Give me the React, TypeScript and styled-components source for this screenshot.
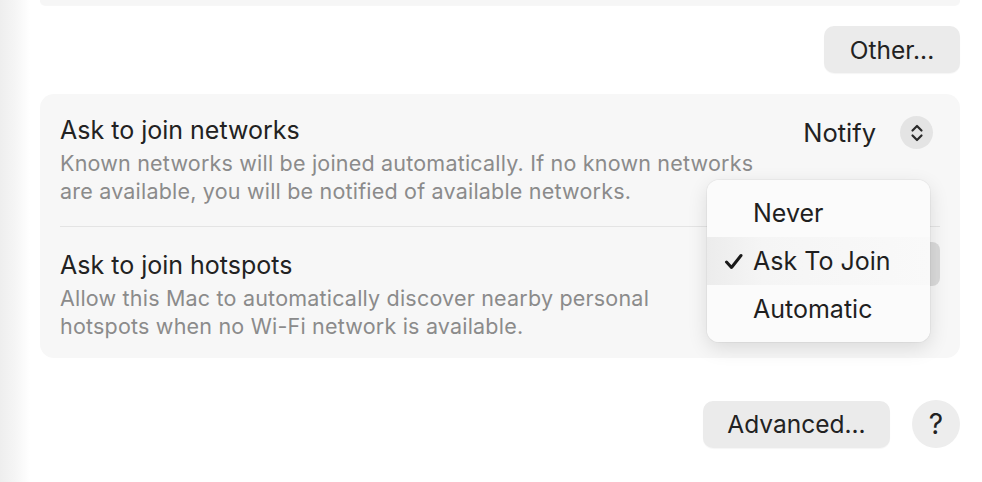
import styled, { createGlobalStyle } from "styled-components";

const GlobalStyle = createGlobalStyle`
  html, body {
    margin: 0;
    padding: 0;
    background: #ffffff;
  }
  body {
    font-family: Inter, "Noto Sans", "Liberation Sans", sans-serif;
    color: #242424;
    -webkit-font-smoothing: antialiased;
  }
`;

const Page = styled.div`
  display: flex;
  width: 982px;
  height: 482px;
  overflow: hidden;
  background: #fff;
`;

const SideShade = styled.div`
  width: 30px;
  flex: none;
  background: linear-gradient(to right, #eeeeee, #f5f5f5 50%, #ffffff);
`;

const Content = styled.div`
  flex: 1;
  display: flex;
  flex-direction: column;
  padding: 0 22px 0 10px;
`;

const CardStub = styled.div`
  height: 5px;
  background: #f6f6f6;
  border-radius: 0 0 14px 14px;
  box-shadow: 0 1px 0 rgba(0, 0, 0, 0.03);
`;

const ButtonRow = styled.div<{ $top: number }>`
  display: flex;
  justify-content: flex-end;
  align-items: center;
  gap: 22px;
  margin-top: ${(p) => p.$top}px;
`;

const PushButton = styled.button<{ $width: number }>`
  width: ${(p) => p.$width}px;
  height: 47px;
  border: none;
  border-radius: 10px;
  background: #ebebeb;
  box-shadow: 0 1px 1px rgba(0, 0, 0, 0.04);
  font-family: inherit;
  font-size: 24.5px;
  color: #222;
  padding: 0;
`;

const HelpButton = styled.button`
  width: 48px;
  height: 48px;
  border: none;
  border-radius: 50%;
  background: #ededed;
  font-family: inherit;
  font-size: 28px;
  color: #222;
  padding: 0;
`;

const Card = styled.div`
  position: relative;
  margin-top: 21px;
  background: #f7f7f7;
  border-radius: 14px;
  padding: 0 20px;
  height: 264px;
  box-sizing: border-box;
`;

const Row = styled.div<{ $top: number; $bottom: number; $divider?: boolean }>`
  display: flex;
  justify-content: space-between;
  align-items: flex-start;
  padding: ${(p) => p.$top}px 0 ${(p) => p.$bottom}px;
  border-bottom: ${(p) => (p.$divider ? "1px solid #e4e4e4" : "none")};
`;

const TextBlock = styled.div`
  display: flex;
  flex-direction: column;
`;

const Title = styled.div`
  font-size: 25px;
  line-height: 28px;
  color: #222;
  margin-bottom: 5px;
`;

const Description = styled.div`
  font-size: 21.5px;
  letter-spacing: 0.2px;
  line-height: 28px;
  color: #8b8b8b;
  white-space: nowrap;
`;

const Popup = styled.div`
  display: flex;
  align-items: center;
  gap: 24px;
  margin-right: 7px;
  font-size: 25.5px;
  line-height: 28px;
  color: #222;
`;

const StepperCircle = styled.div`
  width: 33px;
  height: 33px;
  border-radius: 50%;
  background: #e4e4e4;
  display: flex;
  align-items: center;
  justify-content: center;
`;

const HiddenPopup = styled.div`
  width: 210px;
  height: 44px;
  margin-top: -9px;
  border-radius: 8px;
  background: #dadada;
`;

const Menu = styled.div`
  position: absolute;
  left: 667px;
  top: 86px;
  width: 223px;
  padding: 9px 0;
  box-sizing: border-box;
  border-radius: 12px;
  background: rgba(251, 251, 251, 0.98);
  box-shadow: 0 6px 20px rgba(0, 0, 0, 0.12), 0 0 0 1px rgba(0, 0, 0, 0.035);
  display: flex;
  flex-direction: column;
`;

const MenuItem = styled.div<{ $active?: boolean }>`
  height: 48px;
  display: flex;
  align-items: center;
  padding-left: 46px;
  position: relative;
  font-size: 25px;
  color: #1f1f1f;
  background: ${(p) =>
    p.$active
      ? "linear-gradient(to right, #ececec, #f5f5f5 25%, #f9f9f9)"
      : "transparent"};
`;

const Check = styled.svg`
  position: absolute;
  left: 17px;
  top: 16px;
`;

function Stepper() {
  return (
    <StepperCircle>
      <svg width="14" height="20" viewBox="0 0 14 20">
        <path
          d="M2.5 7.5 L7 3 L11.5 7.5 M2.5 12.5 L7 17 L11.5 12.5"
          fill="none"
          stroke="#2a2a2a"
          strokeWidth="2.2"
          strokeLinecap="round"
          strokeLinejoin="round"
        />
      </svg>
    </StepperCircle>
  );
}

export default function App() {
  return (
    <>
      <GlobalStyle />
      <Page>
        <SideShade />
        <Content>
          <CardStub />
          <ButtonRow $top={21}>
            <PushButton $width={136}>Other...</PushButton>
          </ButtonRow>
          <Card>
            <Row $top={22} $bottom={21} $divider>
              <TextBlock>
                <Title>Ask to join networks</Title>
                <Description>
                  Known networks will be joined automatically. If no known networks
                  <br />
                  are available, you will be notified of available networks.
                </Description>
              </TextBlock>
              <Popup>
                Notify
                <Stepper />
              </Popup>
            </Row>
            <Row $top={24} $bottom={20}>
              <TextBlock>
                <Title>Ask to join hotspots</Title>
                <Description>
                  Allow this Mac to automatically discover nearby personal
                  <br />
                  hotspots when no Wi-Fi network is available.
                </Description>
              </TextBlock>
              <HiddenPopup />
            </Row>
            <Menu>
              <MenuItem>Never</MenuItem>
              <MenuItem $active>
                <Check width="20" height="17" viewBox="0 0 20 17">
                  <path
                    d="M2.5 9 L7.5 14.5 L17 2.5"
                    fill="none"
                    stroke="#1a1a1a"
                    strokeWidth="3"
                    strokeLinecap="round"
                    strokeLinejoin="round"
                  />
                </Check>
                Ask To Join
              </MenuItem>
              <MenuItem>Automatic</MenuItem>
            </Menu>
          </Card>
          <ButtonRow $top={42}>
            <PushButton $width={187}>Advanced...</PushButton>
            <HelpButton>?</HelpButton>
          </ButtonRow>
        </Content>
      </Page>
    </>
  );
}
